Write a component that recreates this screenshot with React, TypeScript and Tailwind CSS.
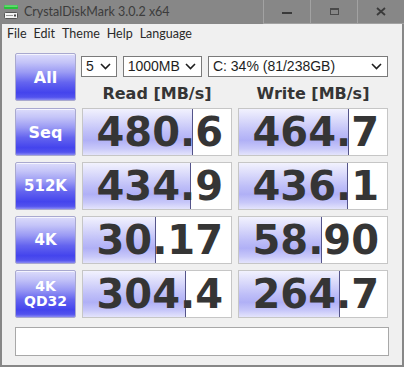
import React from "react";

const scores = [
  { label: ["Seq"], size: "text-[16px]", read: "480.6", readFill: 110, write: "464.7", writeFill: 110 },
  { label: ["512K"], size: "text-[15px]", read: "434.9", readFill: 108, write: "436.1", writeFill: 109 },
  { label: ["4K"], size: "text-[15px]", read: "30.17", readFill: 73, write: "58.90", writeFill: 83 },
  { label: ["4K", "QD32"], size: "text-[14px]", read: "304.4", readFill: 103, write: "264.7", writeFill: 101 },
];

function TestButton({ children, size }: { children: React.ReactNode; size: string }) {
  return (
    <div
      className={`flex h-[48px] w-[61px] shrink-0 flex-col items-center justify-center rounded-[2px] border border-[#a9a9cf] bg-[linear-gradient(to_bottom,#dcdcfb_0%,#c4c4f8_18%,#9a9af4_40%,#6464ef_62%,#4444ed_84%,#5252ee_94%,#8a8af3_100%)] font-['DejaVu_Sans',sans-serif] font-bold leading-[15px] text-white shadow-[inset_0_1px_0_rgba(255,255,255,0.7)] ${size}`}
    >
      {children}
    </div>
  );
}

function ScoreCell({ value, fill }: { value: string; fill: number }) {
  return (
    <div className="relative h-[48px] w-[150px] shrink-0 overflow-hidden border border-[#c6c6c6] bg-white">
      <div
        className="absolute inset-y-0 left-0 border-r border-[#54548a] bg-[linear-gradient(to_bottom,#f2f2fe_0%,#dcdcfb_22%,#bfbff8_50%,#b0b0f6_68%,#c8c8f9_86%,#e4e4fc_100%)]"
        style={{ width: fill }}
      />
      <div className="relative flex h-full items-center justify-end pr-[8px] font-['DejaVu_Sans',sans-serif] text-[40px] font-bold leading-none text-[#353535]">
        {value}
      </div>
    </div>
  );
}

function Chevron() {
  return (
    <svg width="11" height="7" viewBox="0 0 11 7" className="shrink-0">
      <polyline points="1,1 5.5,5.5 10,1" fill="none" stroke="#1e1e1e" strokeWidth="1.6" />
    </svg>
  );
}

function Select({ value, width }: { value: string; width: string }) {
  return (
    <div
      className={`flex h-[21px] items-center justify-between border border-[#7a7a7a] bg-white pl-[4px] pr-[5px] font-['Liberation_Sans',sans-serif] text-[14px] text-[#1e1e1e] ${width}`}
    >
      <span>{value}</span>
      <Chevron />
    </div>
  );
}

function AppIcon() {
  return (
    <svg width="16" height="16" viewBox="0 0 16 16">
      <rect x="1" y="1" width="14" height="4" rx="1" fill="#27c23a" />
      <rect x="1.5" y="1.5" width="13" height="1.2" fill="#7ee58a" />
      <rect x="1.5" y="8.5" width="13" height="6" rx="1" fill="#f4f4f4" stroke="#555" />
      <rect x="3" y="11" width="7" height="1" fill="#999" />
      <rect x="11" y="10.5" width="2" height="2" fill="#444" />
    </svg>
  );
}

export default function App() {
  return (
    <div className="flex h-[367px] w-[404px] flex-col bg-[#878787] px-[2px] pb-[2px]">
      <div className="-mx-[2px] flex h-[24px] shrink-0 items-stretch">
        <div className="flex flex-1 items-center gap-[5px] pl-[3px]">
          <AppIcon />
          <span className="font-['Lato',sans-serif] text-[12.5px] text-[#3c3c3c]">
            CrystalDiskMark 3.0.2 x64
          </span>
        </div>
        <div className="flex border-b border-l border-[#a2a2a2]">
          <div className="flex w-[47px] items-center justify-center border-r border-[#a2a2a2]">
            <div className="mt-[3px] h-[2px] w-[10px] bg-[#3a3a3a]" />
          </div>
          <div className="flex w-[47px] items-center justify-center border-r border-[#a2a2a2]">
            <div className="h-[7px] w-[9px] border border-t-2 border-[#4a4a4a]" />
          </div>
          <div className="flex w-[46px] items-center justify-center">
            <svg width="10" height="9" viewBox="0 0 10 9">
              <path d="M1 1 L9 8 M9 1 L1 8" stroke="#3a3a3a" strokeWidth="1.8" />
            </svg>
          </div>
        </div>
      </div>

      <div className="flex h-[21px] shrink-0 items-center gap-[7px] bg-[#f0f0f0] pl-[5px] font-['Lato',sans-serif] text-[12.5px] text-[#2a2a2a]">
        <span>File</span>
        <span>Edit</span>
        <span>Theme</span>
        <span>Help</span>
        <span>Language</span>
      </div>

      <div className="flex flex-1 flex-col bg-[#f0f0f0] pl-[13px] pt-[8px]">
        <div className="flex h-[48px] gap-[6px]">
          <TestButton size="text-[16px]">All</TestButton>
          <div className="flex w-[306px] flex-col">
            <div className="-ml-[1px] mt-[3px] flex gap-[6px]">
              <Select value="5" width="w-[36px]" />
              <Select value="1000MB" width="w-[80px]" />
              <Select value="C: 34% (81/238GB)" width="w-[182px]" />
            </div>
            <div className="mt-[9px] flex h-[16px] gap-[6px] font-['DejaVu_Sans',sans-serif] text-[16px] font-bold leading-none text-[#353535]">
              <div className="w-[150px] text-center">Read [MB/s]</div>
              <div className="w-[150px] text-center">Write [MB/s]</div>
            </div>
          </div>
        </div>

        <div className="mt-[7px] flex flex-col gap-[6px]">
          {scores.map((row) => (
            <div key={row.read} className="flex gap-[6px]">
              <TestButton size={row.size}>
                {row.label.map((l) => (
                  <span key={l}>{l}</span>
                ))}
              </TestButton>
              <ScoreCell value={row.read} fill={row.readFill} />
              <ScoreCell value={row.write} fill={row.writeFill} />
            </div>
          ))}
        </div>

        <div className="mt-[9px] h-[29px] w-[374px] border border-[#a8a8a8] bg-white" />
      </div>
    </div>
  );
}
